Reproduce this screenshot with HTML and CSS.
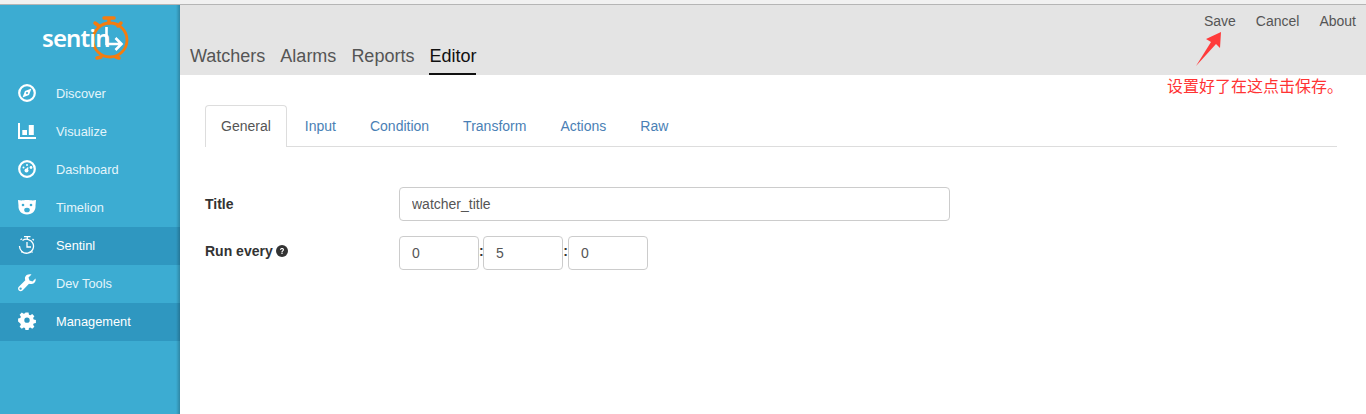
FILE: index.html
```html
<!DOCTYPE html>
<html lang="en">
<head>
<meta charset="utf-8">
<title>Sentinl</title>
<link rel="stylesheet" href="styles.css">
</head>
<body>
<div class="app">
  <aside class="sidebar">
    <div class="logo">
      <svg class="logo-mark" viewBox="0 0 44 50" width="44" height="50">
        <circle cx="22" cy="26" r="17" fill="none" stroke="#f57c0f" stroke-width="2.800"/>
        <path d="M16 4h10M21 4v5M7 9l4 3M33 9l-3 3M9 44l4-1M31 44l-3-1" stroke="#f57c0f" stroke-width="3.500" stroke-linecap="round" fill="none"/>
        <path d="M18.500 13v17h15M27.500 24l6 6-6 6" stroke="#fff" stroke-width="2.600" fill="none"/>
      </svg>
      <span class="logo-text">sentin</span>
    </div>
    <nav class="nav">
      <a class="nav-item"><svg class="nav-icon" viewBox="0 0 18 18"><circle cx="9" cy="9" r="7.800" fill="none" stroke="#fff" stroke-width="2.200"/><path d="M13.500 4.500l-2.500 6.500-6.500 2.500 2.500-6.500zM9 8a1 1 0 1 0 .01 0z" fill="#fff" fill-rule="evenodd"/></svg><span>Discover</span></a>
      <a class="nav-item"><svg class="nav-icon" viewBox="0 0 18 18"><path d="M0 1h2v14h16v2H0zM4.300 8H9v5H4.300zM10.800 3h5v10h-5z" fill="#fff"/></svg><span>Visualize</span></a>
      <a class="nav-item"><svg class="nav-icon" viewBox="0 0 18 18"><circle cx="9" cy="9" r="7.800" fill="none" stroke="#fff" stroke-width="2.200"/><circle cx="8.500" cy="10.500" r="2" fill="#fff"/><path d="M8.500 10.500l1.500-3" stroke="#fff" stroke-width="1.600"/><circle cx="5.500" cy="7.500" r="1" fill="#fff"/><circle cx="9" cy="5" r="1" fill="#fff"/><circle cx="13" cy="7.500" r="1.400" fill="#fff"/></svg><span>Dashboard</span></a>
      <a class="nav-item"><svg class="nav-icon" viewBox="0 0 18 18"><path d="M0 2l3.500 .5c2-.7 9-.7 11 0L18 2l-.5 5.500c.5 5-3 9-8.500 9s-9-4-8.500-9z" fill="#fff"/><circle cx="5" cy="7" r="1.300" fill="#3cacd2"/><circle cx="13" cy="7" r="1.300" fill="#3cacd2"/><ellipse cx="9" cy="12" rx="2.800" ry="2.300" fill="#3cacd2"/></svg><span>Timelion</span></a>
      <a class="nav-item dark"><svg class="nav-icon" viewBox="0 0 18 18"><path d="M6 .7h6.500M9.300 .7v2.500M14.500 3l1.300 1.300M2.500 3.800L4 2.800M9 6v5h4M3.500 16.500l1-1M14.500 16.500l-1-1" stroke="#fff" stroke-width="1.300" fill="none"/><path d="M4.500 4.500a7 7 0 1 1-3 5.500" stroke="#fff" stroke-width="1.300" fill="none"/></svg><span>Sentinl</span></a>
      <a class="nav-item"><svg class="nav-icon" viewBox="0 0 18 18"><path d="M17.500 4.500l-3 3-3-1-1-3 3-3C10.500-.3 7.500 1 7 3.500c-.2 1 0 2 .3 2.700L.8 12.700c-1 1-1 2.600 0 3.700 1 1 2.700 1 3.700 0l6.500-6.600c3.500 1.200 7.500-1.500 6.500-5.300zM2.600 15.800a1.200 1.200 0 1 1 0-2.400 1.200 1.200 0 0 1 0 2.400z" fill="#fff" fill-rule="evenodd"/></svg><span>Dev Tools</span></a>
      <a class="nav-item dark"><svg class="nav-icon" viewBox="0 0 18 18"><path d="M7.300 0h3.400l.5 2.500 1.500.6 2.100-1.400 2.400 2.400-1.400 2.100.6 1.500 2.500.5v3.400l-2.500.5-.6 1.500 1.400 2.100-2.400 2.400-2.100-1.400-1.500.6-.5 2.500H7.300l-.5-2.500-1.500-.6-2.100 1.400-2.400-2.400 1.400-2.100-.6-1.500L-.9 10V6.600l2.500-.5.6-1.500L.8 2.500 3.200.1l2.100 1.400 1.500-.6zM9 5.500a3 3 0 1 0 0 6 3 3 0 0 0 0-6z" fill="#fff" fill-rule="evenodd" transform="translate(.9 .5) scale(.9)"/></svg><span>Management</span></a>
    </nav>
  </aside>
  <main class="main">
    <header class="topbar">
      <div class="top-actions">
        <a>Save</a><a>Cancel</a><a>About</a>
      </div>
      <div class="top-tabs">
        <a>Watchers</a><a>Alarms</a><a>Reports</a><a class="active">Editor</a>
      </div>
      <svg class="arrow" viewBox="0 0 30 36" width="30" height="36"><path d="M1 35L16 11l-5-3 15-7-1 16-4-4z" fill="#ff3b3b"/></svg>
      <div class="note">设置好了在这点击保存。</div>
    </header>
    <section class="content">
      <ul class="tabs">
        <li class="tab active">General</li>
        <li class="tab">Input</li>
        <li class="tab">Condition</li>
        <li class="tab">Transform</li>
        <li class="tab">Actions</li>
        <li class="tab">Raw</li>
      </ul>
      <form class="form">
        <div class="row">
          <label class="label">Title</label>
          <input class="field title-field" type="text" value="watcher_title">
        </div>
        <div class="row">
          <label class="label run-label">Run every <svg class="help" viewBox="0 0 12 12"><circle cx="6" cy="6" r="6" fill="#333"/><path d="M4 4.700C4 3.500 5 3 6 3c1.200 0 2 .7 2 1.700C8 6 6.600 6 6.600 7.200H5.400C5.400 5.500 6.800 5.500 6.800 4.700 6.800 4.300 6.400 4.100 6 4.100c-.5 0-.9.300-.9.800zM5.400 7.800h1.200V9H5.400z" fill="#fff"/></svg></label>
          <div class="times">
            <input class="field time" type="text" value="0"><span class="colon">:</span>
            <input class="field time" type="text" value="5"><span class="colon wide">:</span>
            <input class="field time" type="text" value="0">
          </div>
        </div>
      </form>
    </section>
  </main>
</div>
</body>
</html>
```
FILE: styles.css
```css
* { box-sizing: border-box; }
html, body { margin: 0; height: 100%; }
body { font-family: "Liberation Sans", Arial, sans-serif; font-size: 14px; color: #333; background: #fff; overflow: hidden; }
.app { display: flex; height: 414px; border-top: 5px solid #f1f1f1; position: relative; }
.app::before { content: ""; position: absolute; left: 0; right: 0; top: -1px; height: 1px; background: #b5b5b5; }
.sidebar { width: 180px; flex: none; background: #3cacd2; position: relative; }
.sidebar::after { content: ""; position: absolute; top: 0; bottom: 0; right: 0; width: 4px; background: linear-gradient(to right, rgba(0,0,0,0), rgba(0,0,0,.22)); }
.logo { height: 70px; position: relative; padding: 18px 0 0 42px; }
.logo-text { display: block; position: relative; color: #fff; font: 600 24px/30px "Noto Sans", sans-serif; letter-spacing: -0.9px; }
.logo-mark { position: absolute; left: 88px; top: 9px; }
.nav { display: flex; flex-direction: column; }
.nav-item { height: 38px; display: flex; align-items: center; padding: 0 0 2px 18px; color: #e4f5fb; font-size: 12.8px; gap: 20px; }
.nav-item.dark { background: #2f97c0; color: #fff; }
.nav-icon { width: 18px; height: 18px; flex: none; }
.main { flex: 1; min-width: 0; display: flex; flex-direction: column; }
.topbar { height: 70px; background: #e4e4e4; position: relative; display: flex; flex-direction: column; flex: none; }
.top-actions { display: flex; justify-content: flex-end; gap: 20px; padding: 8px 10px 0 0; font-size: 14px; line-height: 16px; color: #555; }
.top-tabs { display: flex; gap: 15px; padding: 0 0 0 10px; margin-top: 17px; font-size: 18px; line-height: 20px; color: #555; }
.top-tabs a { padding: 0 0 7px; }
.top-tabs a.active { color: #111; border-bottom: 2px solid #111; }
.arrow { position: absolute; left: 1015px; top: 26px; }
.note { position: absolute; left: 987px; top: 71px; font: 16px/18px "Noto Sans CJK SC", sans-serif; color: #f33; white-space: nowrap; }
.content { padding: 30px 29px 0 25px; }
.tabs { display: flex; list-style: none; margin: 0; padding: 0; border-bottom: 1px solid #ddd; height: 42px; }
.tab { height: 42px; padding: 10px 15px 0; margin-right: 2px; line-height: 20px; color: #4a7fb5; border: 1px solid transparent; border-bottom: 0; }
.tab.active { color: #555; background: #fff; border-color: #ddd; border-radius: 4px 4px 0 0; }
.form { margin-top: 40px; display: flex; flex-direction: column; gap: 15px; }
.row { display: flex; align-items: center; }
.label { width: 194px; font-weight: 700; font-size: 14px; color: #333; flex: none; white-space: nowrap; }
.run-label { margin-top: -4px; }
.field { height: 34px; border: 1px solid #ccc; border-radius: 4px; padding: 0 12px; font: 14px "Liberation Sans", Arial, sans-serif; color: #555; background: #fff; }
.title-field { width: 551px; }
.times { display: flex; align-items: center; }
.time { width: 80px; }
.colon { width: 4px; text-align: center; font-weight: 700; color: #333; margin-top: -4px; }
.colon.wide { width: 5px; }
.help { width: 12px; height: 12px; vertical-align: -1px; margin-left: -1px; }
```
